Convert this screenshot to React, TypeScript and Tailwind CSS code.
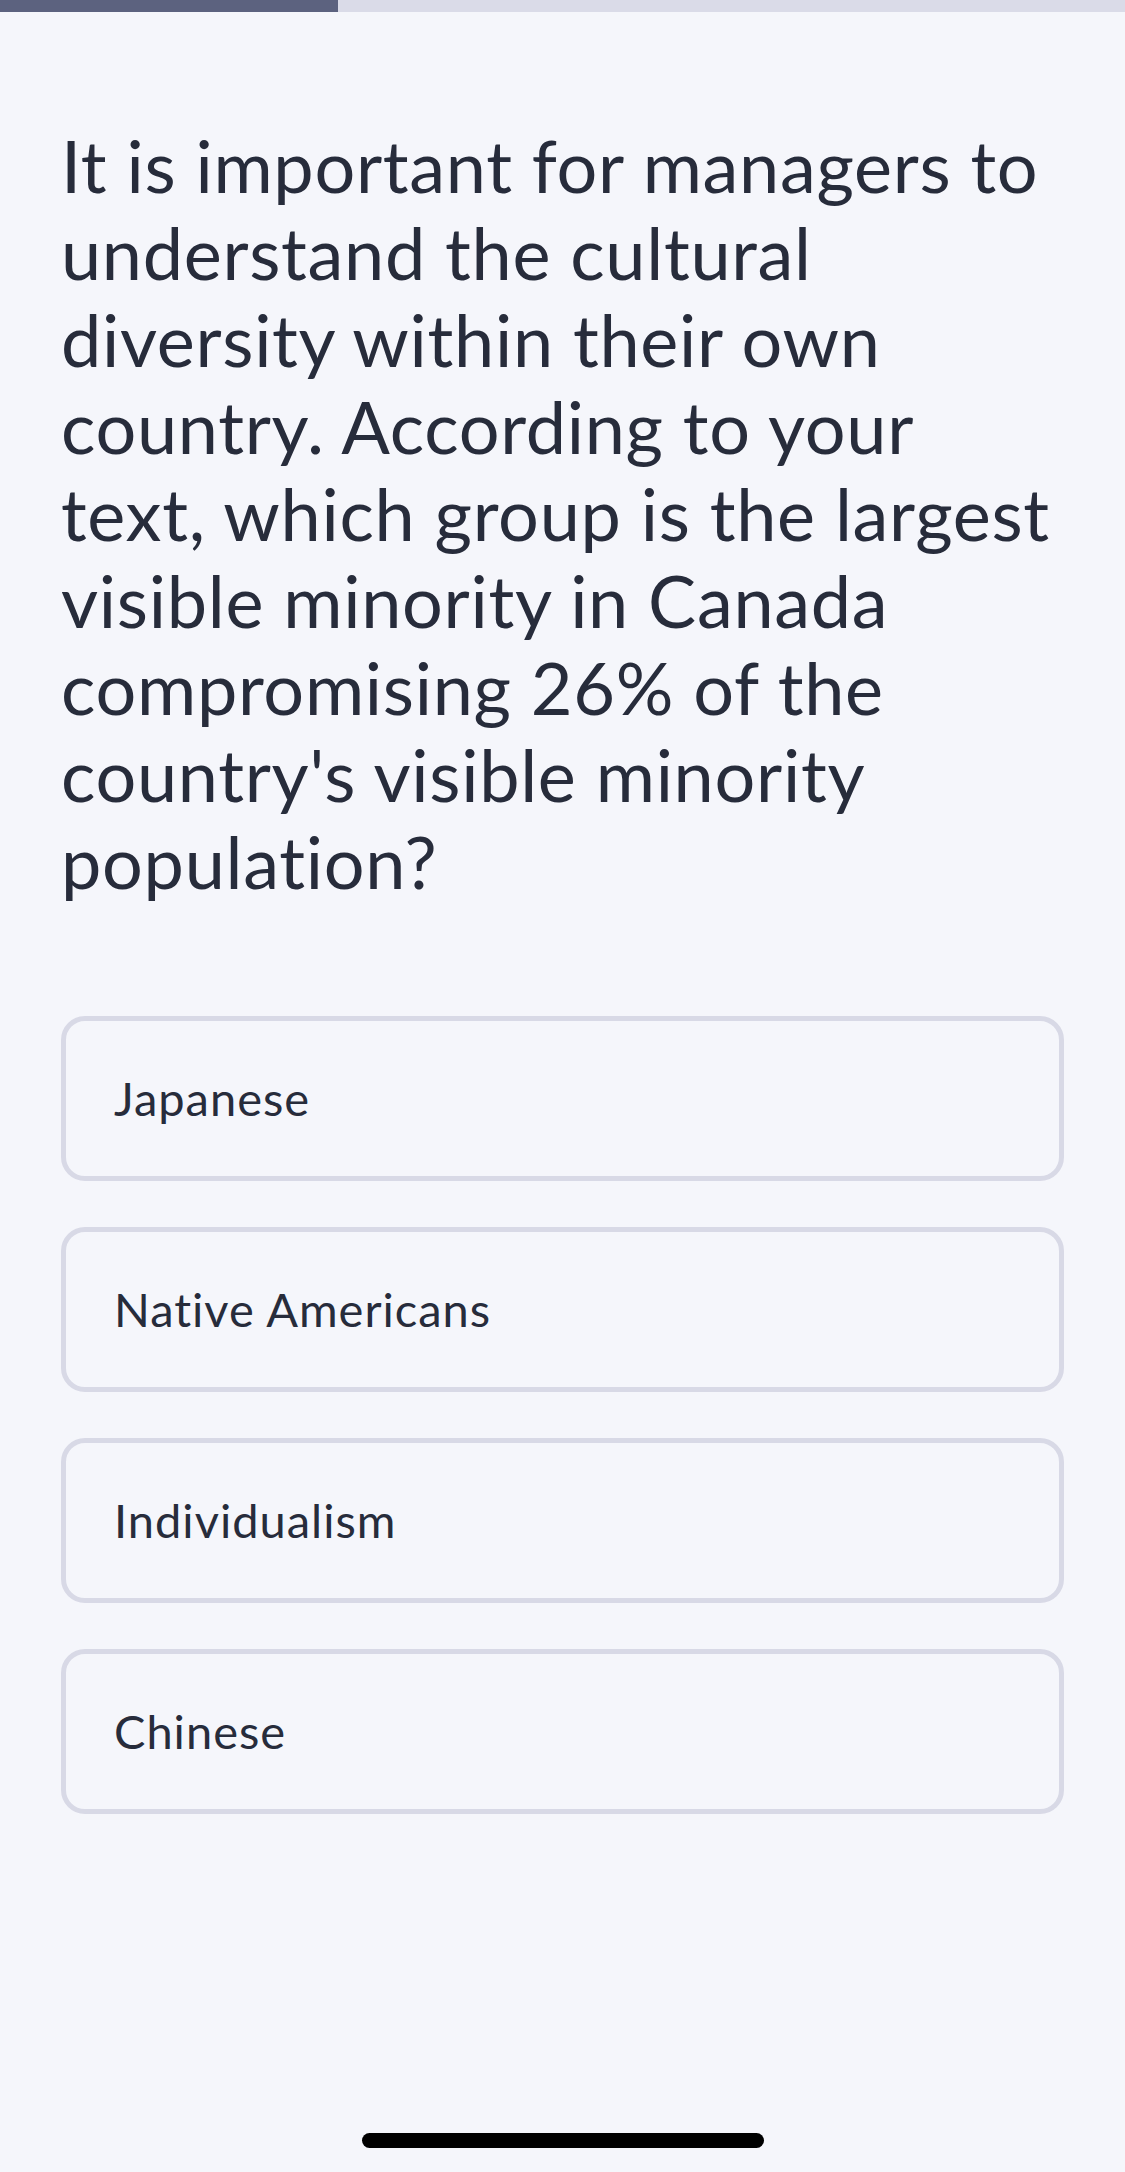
export default function App() {
  const options = ["Japanese", "Native Americans", "Individualism", "Chinese"];

  return (
    <div className="relative h-[2172px] w-full bg-[#f5f6fb] text-[#272c3b] font-['Lato',sans-serif] overflow-hidden">
      {/* progress */}
      <div className="h-[12px] w-full bg-[#dadbe8]">
        <div className="h-full w-[338px] bg-[#5c627f]"></div>
      </div>

      <div className="px-[61px]">
        <h1 className="mt-[110px] text-[72px] leading-[87px] font-normal tracking-[0.7px]">
          It is important for managers to understand the cultural diversity within their own country. According to your text, which group is the largest visible minority in Canada compromising 26% of the country's visible minority population?
        </h1>

        <div className="mt-[111px] flex flex-col gap-[46px]">
          {options.map((opt) => (
            <button
              key={opt}
              className="h-[165px] w-full rounded-[24px] border-[5px] border-[#d8d9e6] bg-[#f5f6fb] pl-[48px] text-left text-[47px] tracking-[1px]"
            >
              {opt}
            </button>
          ))}
        </div>
      </div>

      {/* home indicator */}
      <div className="absolute bottom-[24px] left-[362px] h-[15px] w-[402px] rounded-full bg-black"></div>
    </div>
  );
}
